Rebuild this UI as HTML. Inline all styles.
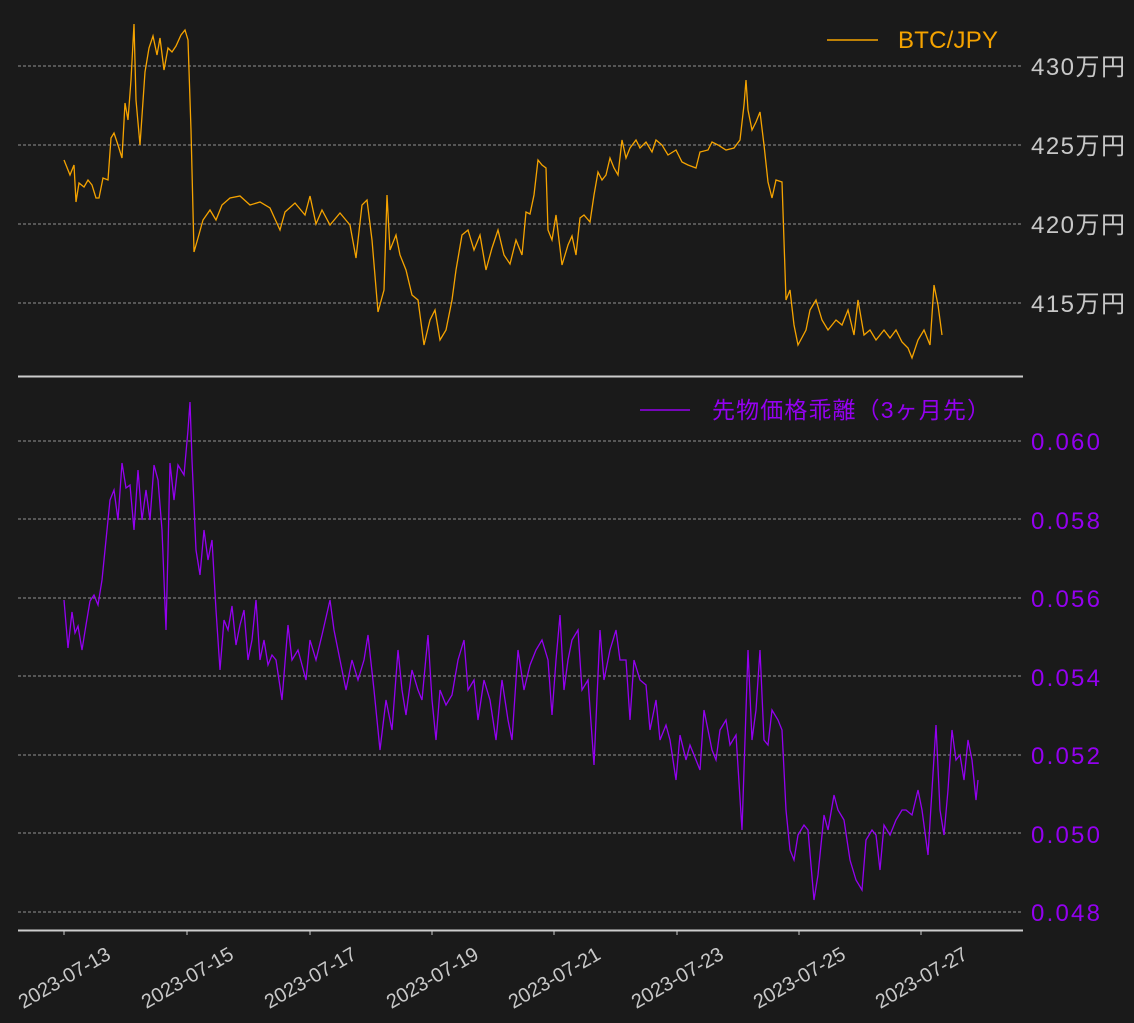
<!DOCTYPE html>
<html><head><meta charset="utf-8"><style>
html,body{margin:0;padding:0;background:#1a1a1a;}
svg{display:block;}
text{font-family:"Liberation Sans","Noto Sans CJK JP",sans-serif;}
</style></head><body>
<svg width="1134" height="1023" viewBox="0 0 1134 1023">
<rect width="1134" height="1023" fill="#1a1a1a"/>
<g stroke="#bbb" stroke-width="0.8" stroke-dasharray="3,2">
<line x1="18" x2="1023" y1="66" y2="66"/><line x1="18" x2="1023" y1="145" y2="145"/>
<line x1="18" x2="1023" y1="224" y2="224"/><line x1="18" x2="1023" y1="303" y2="303"/>
<line x1="18" x2="1023" y1="441" y2="441"/><line x1="18" x2="1023" y1="519" y2="519"/>
<line x1="18" x2="1023" y1="598" y2="598"/><line x1="18" x2="1023" y1="676" y2="676"/>
<line x1="18" x2="1023" y1="755" y2="755"/><line x1="18" x2="1023" y1="833" y2="833"/>
<line x1="18" x2="1023" y1="912" y2="912"/>
</g>
<line x1="18" x2="1023" y1="376.5" y2="376.5" stroke="#ccc" stroke-width="2"/>
<line x1="18" x2="1023" y1="930.5" y2="930.5" stroke="#ccc" stroke-width="2"/>
<g stroke="#ccc" stroke-width="1">
<line x1="64" x2="64" y1="931" y2="935"/><line x1="187" x2="187" y1="931" y2="935"/><line x1="310" x2="310" y1="931" y2="935"/><line x1="432" x2="432" y1="931" y2="935"/><line x1="554" x2="554" y1="931" y2="935"/><line x1="677" x2="677" y1="931" y2="935"/><line x1="799" x2="799" y1="931" y2="935"/><line x1="921" x2="921" y1="931" y2="935"/>
</g>
<g fill="#c8c8c8" font-size="24">
<text x="1031" y="75" textLength="94">430万円</text><text x="1031" y="154" textLength="94">425万円</text><text x="1031" y="233" textLength="94">420万円</text><text x="1031" y="312" textLength="94">415万円</text>
</g>
<g fill="#9400f0" font-size="24">
<text x="1031" y="450" textLength="69">0.060</text><text x="1031" y="529" textLength="69">0.058</text><text x="1031" y="607" textLength="69">0.056</text><text x="1031" y="686" textLength="69">0.054</text><text x="1031" y="764" textLength="69">0.052</text><text x="1031" y="843" textLength="69">0.050</text><text x="1031" y="921" textLength="69">0.048</text>
</g>
<g fill="#c8c8c8" font-size="20" text-anchor="end">
<text transform="translate(112,958) rotate(-30)">2023-07-13</text>
<text transform="translate(235,958) rotate(-30)">2023-07-15</text>
<text transform="translate(358,958) rotate(-30)">2023-07-17</text>
<text transform="translate(480,958) rotate(-30)">2023-07-19</text>
<text transform="translate(602,958) rotate(-30)">2023-07-21</text>
<text transform="translate(725,958) rotate(-30)">2023-07-23</text>
<text transform="translate(847,958) rotate(-30)">2023-07-25</text>
<text transform="translate(969,958) rotate(-30)">2023-07-27</text>
</g>
<line x1="827" x2="878" y1="40" y2="40" stroke="#f5a300" stroke-width="1.5"/>
<text x="898" y="48" fill="#f5a300" font-size="24" textLength="100">BTC/JPY</text>
<line x1="640" x2="690" y1="410" y2="410" stroke="#9400f0" stroke-width="1.5"/>
<text x="712" y="418" fill="#9400f0" font-size="23" textLength="278">先物価格乖離（3ヶ月先）</text>
<polyline fill="none" stroke="#f5a300" stroke-width="1.3" points="64,160 70,175 74,165 76,202 79,183 84,187 88,180 92,185 96,198 99,198 103,178 108,180 111,138 114,133 118,145 122,158 125,103 128,120 131,80 134,24 136,100 140,145 145,72 149,48 153,36 157,55 160,38 164,70 168,48 172,52 176,46 181,35 185,30 188,40 191,130 194,252 198,238 203,220 210,210 216,220 222,205 230,198 240,196 250,205 260,202 270,208 280,230 285,212 295,203 305,215 310,196 316,224 322,210 330,225 340,213 350,225 356,258 362,205 367,200 372,240 378,312 384,290 387,195 390,250 396,235 400,255 406,270 412,295 418,300 424,345 430,320 435,310 440,340 446,330 452,300 456,270 462,235 468,230 474,250 480,235 486,270 492,248 498,230 504,255 510,264 516,240 522,255 526,212 530,214 534,195 538,160 542,165 546,168 548,230 552,240 556,215 562,265 568,245 572,236 576,255 580,218 584,215 590,222 594,195 598,172 602,180 606,175 610,158 614,168 618,175 622,140 626,158 630,148 636,140 640,148 646,142 652,152 656,140 662,145 668,155 676,150 682,162 688,165 696,168 700,152 708,150 712,142 718,145 726,150 734,148 740,140 744,105 746,80 748,110 752,130 756,122 760,112 764,145 768,182 772,198 776,180 782,182 786,300 790,290 794,325 798,345 806,330 810,310 816,300 822,320 828,330 836,320 842,325 848,310 854,335 858,300 864,335 870,330 876,340 884,330 890,338 896,330 902,342 908,348 912,358 918,340 924,330 930,345 934,285 938,305 942,335"/>
<polyline fill="none" stroke="#9400f0" stroke-width="1.3" points="64,600 68,648 72,612 75,633 78,626 82,650 86,625 90,601 94,595 98,605 102,580 106,540 110,500 114,490 118,520 122,463 126,488 130,485 134,530 138,470 142,520 146,490 150,520 154,465 158,480 162,530 166,630 168,550 170,463 174,500 178,465 184,475 188,430 190,402 192,460 196,550 200,575 204,530 208,560 212,540 216,610 220,670 224,620 228,630 232,606 236,645 240,625 244,610 248,660 252,640 256,600 260,660 264,640 268,665 272,655 276,660 282,700 288,625 292,660 298,650 306,680 310,640 316,660 322,635 330,600 334,630 340,660 346,690 352,660 358,680 364,660 368,635 374,690 380,750 386,700 392,730 398,650 402,690 406,715 412,670 418,690 422,700 428,635 432,700 436,740 440,690 446,705 452,695 458,660 464,640 468,690 474,680 478,720 484,680 490,700 496,740 502,680 508,720 512,740 518,650 524,690 530,665 536,650 542,640 548,660 552,715 556,660 560,615 564,690 568,660 572,640 578,630 582,690 588,680 594,765 600,630 604,680 610,650 616,630 620,660 626,660 630,720 634,660 640,680 646,685 650,730 656,700 660,740 666,725 670,740 676,780 680,735 686,760 690,745 696,760 700,770 704,710 708,730 712,750 716,760 720,730 726,720 730,745 736,735 742,830 748,650 752,740 756,710 760,650 764,740 768,745 772,710 778,720 782,730 786,810 790,850 794,860 798,835 804,825 808,830 814,900 818,875 824,815 828,830 834,795 838,810 844,820 850,860 856,880 862,890 866,840 872,830 876,835 880,870 884,825 890,835 896,820 902,810 906,810 912,815 918,790 922,810 928,855 932,790 936,725 940,810 944,835 948,790 952,730 956,760 960,755 964,780 968,740 972,760 976,800 978,780"/>
</svg>
</body></html>
